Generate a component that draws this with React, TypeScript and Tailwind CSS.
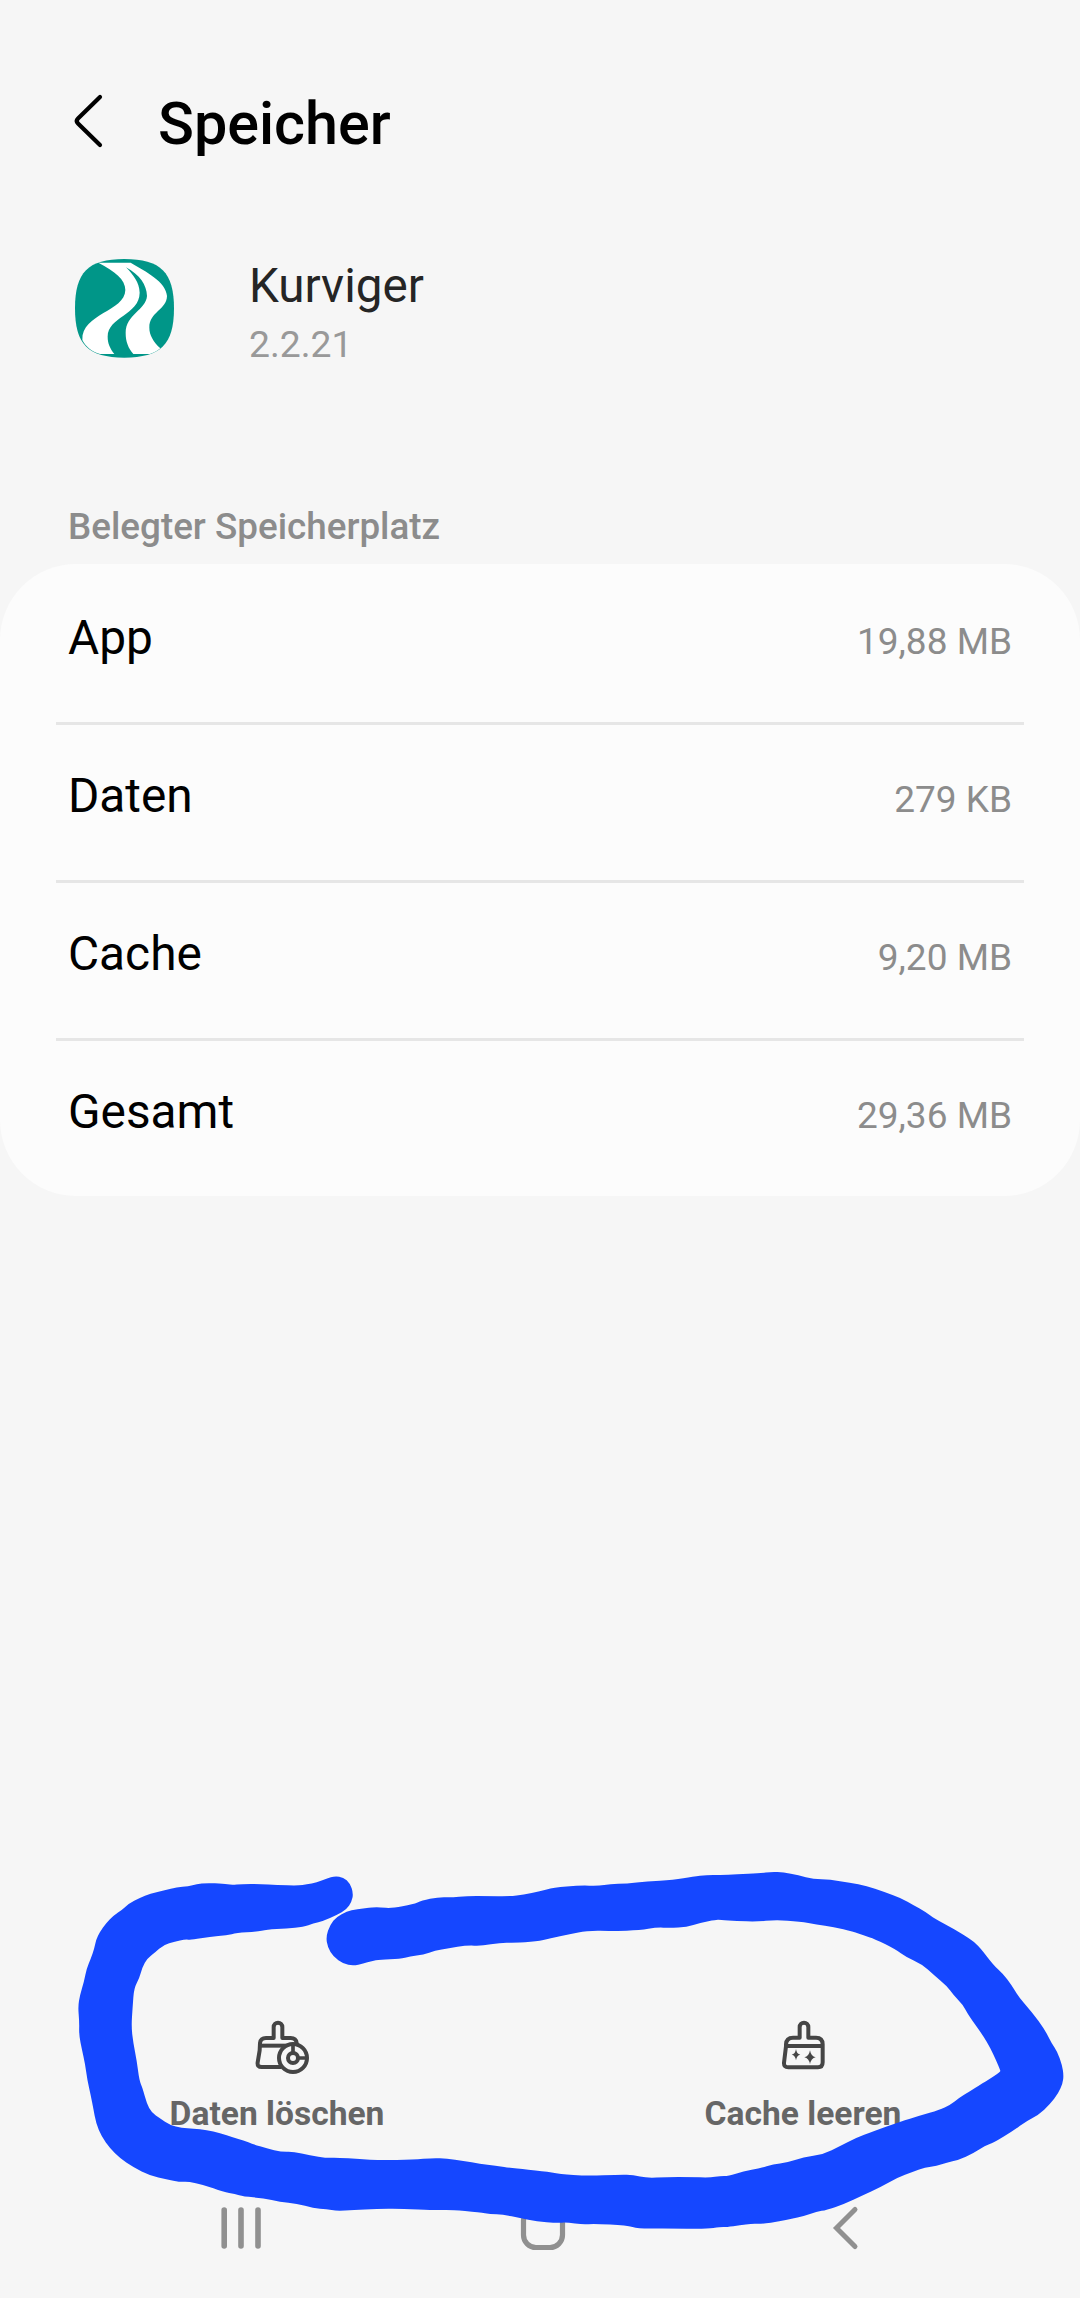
import React from "react";

const ROWS = [
  { label: "App", value: "19,88 MB" },
  { label: "Daten", value: "279 KB" },
  { label: "Cache", value: "9,20 MB" },
  { label: "Gesamt", value: "29,36 MB" },
];

type Segment = { dx: number; dy: number; pts: string };

// Outline of the hand-drawn marker stroke, in thirds of a pixel.
const MARKER: Segment[] = [
  {
    dx: 180,
    dy: 30,
    pts: "880,100 870,70 850,52 825,48 800,55 770,68 740,73 715,77 650,75 600,72 545,72 515,75 490,71 440,69 410,72 385,79 350,82 315,91 270,101 240,113 205,132 188,148 160,167 138,190 120,215 108,240 103,265 92,297 80,325 72,365 60,405 54,440 58,485 57,525 66,570 75,610 82,660 92,705 100,745 108,790 125,830 150,865 180,895 220,922 270,947 320,958 360,966 385,965 430,974 490,996 525,1002 550,1010 610,1014 660,1026 710,1030 760,1045 800,1047 830,1053 880,1050 950,1047",
  },
  {
    dx: 1140,
    dy: 0,
    pts: "60,1076 170,1081 210,1079 300,1087 330,1092 370,1094 420,1104 470,1114 530,1119 560,1117 610,1124 640,1121 740,1126 775,1136 860,1135 980,1137",
  },
  {
    dx: 2160,
    dy: 0,
    pts: "0,1131 20,1131 60,1126 95,1121 125,1122 180,1114 215,1106 250,1099 290,1085 320,1080 370,1063 430,1035 480,1012 530,984 580,965 615,952 650,948 680,938 715,930 760,910 795,887 820,879 880,842 920,813 955,795 990,763 1015,730 1028,700 1031,675 1026,645 1012,605 995,580 975,540 935,485 895,440 875,405 848,370 820,345 780,292 755,270 700,236 645,207 615,185 580,165 545,145 490,125 440,108 390,98 330,89 280,87 235,76 190,67 155,65 120,70 50,73 0,75",
  },
  {
    dx: 1140,
    dy: 0,
    pts: "980,75 940,80 880,90 800,94 740,101 690,102 655,108 600,106 520,113 480,124 430,134 390,139 320,138 260,138 215,142 175,141 125,152 100,163 35,175 0,172",
  },
  {
    dx: 180,
    dy: 30,
    pts: "940,142 890,147 860,155 830,170 810,195 798,230 803,262 820,290 850,312 880,317 910,311 935,303",
  },
  {
    dx: 1140,
    dy: 0,
    pts: "0,328 60,327 90,319 130,314 165,302 205,295 260,286 305,288 360,278 400,278 470,275 510,265 570,253 620,242 700,243 780,241 830,232 870,234 920,231 960,219 1010,209",
  },
  {
    dx: 2160,
    dy: 0,
    pts: "0,210 50,213 110,215 165,210 240,214 290,224 340,231 400,245 430,256 465,267 525,297 560,322 605,342 640,374 680,407 700,435 728,463 745,495 790,558 810,592 828,630 841,661 841,664 838,667 820,680 790,698 740,730 720,742 690,765 658,780 600,797 540,815 460,844 405,865 360,888 310,913 250,922 200,938 160,943 120,955 70,964 25,978 0,978",
  },
  {
    dx: 1140,
    dy: 0,
    pts: "990,983 930,981 860,981 800,984 760,975 720,974 620,978 540,972 490,963 400,955 345,947 300,942 250,932 200,926 160,924 100,929 0,931",
  },
  {
    dx: 180,
    dy: 30,
    pts: "900,897 830,893 800,894 750,886 700,875 665,876 620,865 580,853 550,841 520,833 480,819 440,810 400,806 365,804 330,795 300,775 275,758 260,730 248,685 238,662 230,600 220,550 214,500 218,440 222,385 238,355 247,322 262,295 285,278 310,255 345,245 375,238 395,240 450,230 500,226 530,219 590,215 620,209 680,205 730,201 760,190 790,183 830,165 860,148 875,125",
  },
];

function markerPath(): string {
  const pts = MARKER.flatMap((s) =>
    s.pts.split(" ").map((p) => {
      const [x, y] = p.split(",").map(Number);
      return [x + s.dx, y + s.dy];
    }),
  );
  const mid = (i: number) => {
    const a = pts[i % pts.length];
    const b = pts[(i + 1) % pts.length];
    return `${(a[0] + b[0]) / 2} ${(a[1] + b[1]) / 2}`;
  };
  let d = `M${mid(0)}`;
  for (let i = 1; i <= pts.length; i++) {
    const p = pts[i % pts.length];
    d += `Q${p[0]} ${p[1]} ${mid(i)}`;
  }
  return d + "Z";
}

function MarkerStroke() {
  return (
    <svg
      className="pointer-events-none absolute bottom-0 left-0 h-[448px] w-[1080px]"
      viewBox="0 0 3240 1344"
      aria-hidden="true"
    >
      <path d={markerPath()} fill="#1547ff" />
    </svg>
  );
}

function AppLogo() {
  return (
    <svg className="h-[125px] w-[130px] shrink-0" viewBox="0 0 390 375">
      <path
        d="M193 42C302 42 342 82 342 190S302 338 193 338 45 298 45 190 84 42 193 42Z"
        fill="#009688"
      />
      <path
        d="M115 53C165 80 196 103 196 135C195 200 65 205 67 285C76 304 95 320 120 327L163 327C150 310 143 295 143 275C143 215 238 210 239 143C238 112 220 90 198 67C240 90 260 120 261 153C258 195 197 208 197 264C197 290 205 310 220 327L270 327C283 323 292 317 301 310C280 290 268 270 268 248C268 200 320 195 321 153C318 110 258 80 212 53Z"
        fill="#fff"
      />
    </svg>
  );
}

function ClearDataIcon() {
  return (
    <svg
      className="h-[80px] w-[90px]"
      viewBox="-24 0 270 240"
      fill="none"
      stroke="#454545"
      strokeWidth="12"
      strokeLinejoin="round"
    >
      <path d="M170 122V114Q168 99 152 99H127V66A13 13 0 0 0 101 66V99H78Q62 99 60 114L59 136L53 172Q51 186 65 186H124" />
      <path d="M58 122H140" />
      <circle cx="159" cy="159" r="42" fill="#f6f6f6" />
      <circle cx="159" cy="159" r="15" />
      <path d="M159 118V142M177 159H200" strokeWidth="11" />
    </svg>
  );
}

function ClearCacheIcon() {
  return (
    <svg
      className="h-[80px] w-[90px]"
      viewBox="-6 0 270 240"
      fill="none"
      stroke="#454545"
      strokeWidth="12"
      strokeLinejoin="round"
    >
      <path d="M119 98V66A13 13 0 0 1 145 66V98H168Q188 98 188 118V172Q188 187 174 187H85Q71 187 72 173L78 124V118Q79 98 99 98Z" />
      <path d="M78 123H188" />
      <path
        d="M108 132Q110 147 121 149Q110 151 108 166Q106 151 95 149Q106 147 108 132ZM150 136Q153 154 167 157Q153 160 150 178Q147 160 133 157Q147 154 150 136Z"
        fill="#454545"
        stroke="none"
      />
    </svg>
  );
}

export default function App() {
  return (
    <div className="relative flex h-[2298px] w-[1080px] flex-col overflow-hidden bg-[#f6f6f6] font-['Roboto',sans-serif]">
      <header className="mt-[84px] flex h-20 items-center pl-[60px]">
        <svg className="h-20 w-[60px]" viewBox="0 0 60 80" fill="none">
          <path
            d="M40 13L18 34.500Q15.500 37 18 39.500L40 61"
            stroke="#000"
            strokeWidth="4.200"
            strokeLinecap="round"
          />
        </svg>
        <h1 className="ml-[38px] text-[59.300px] leading-[80px] font-medium text-black">
          Speicher
        </h1>
      </header>

      <section className="mt-[81px] flex h-[125px] pl-[60px]">
        <AppLogo />
        <div className="ml-[59px] flex flex-col gap-2 pt-[13px]">
          <div className="text-[47.600px] leading-[56px] text-[#252525]">
            Kurviger
          </div>
          <div className="text-[37.300px] leading-[44px] text-[#999999]">
            2.2.21
          </div>
        </div>
      </section>

      <h2 className="mt-[135px] pl-[68px] text-[36.800px] leading-[44px] font-medium text-[#8c8c8c]">
        Belegter Speicherplatz
      </h2>

      <ul className="mt-[15px] rounded-[76px] bg-[#fcfcfc] px-14">
        {ROWS.map((r) => (
          <li
            key={r.label}
            className="flex h-[158px] items-baseline justify-between border-t-[3px] border-[#e6e6e6] px-3 pt-[39px] first:border-transparent"
          >
            <span className="text-[47.800px] leading-[64px] text-black">
              {r.label}
            </span>
            <span className="text-[37px] leading-[64px] text-[#8c8c8c]">
              {r.value}
            </span>
          </li>
        ))}
      </ul>

      <div className="mt-[809px] grid grid-cols-2 px-[14px] text-[33.600px] leading-10 font-bold text-[#666666]">
        <button className="flex flex-col items-center gap-[9px]">
          <ClearDataIcon />
          Daten löschen
        </button>
        <button className="flex flex-col items-center gap-[9px]">
          <ClearCacheIcon />
          Cache leeren
        </button>
      </div>

      <nav
        className="mt-[66px] flex justify-between pr-[204px] pl-[211px]"
        aria-label="Navigation"
      >
        <svg className="h-[60px] w-[60px]" viewBox="0 0 60 60" fill="none">
          <path
            d="M13.200 10V46M30 10V46M47 10V46"
            stroke="#909090"
            strokeWidth="5.600"
            strokeLinecap="round"
          />
        </svg>
        <svg className="h-[60px] w-[60px]" viewBox="1 0 60 60" fill="none">
          <rect
            x="10.500"
            y="8"
            width="39"
            height="39.500"
            rx="12.500"
            stroke="#909090"
            strokeWidth="5.200"
          />
        </svg>
        <svg className="h-[60px] w-[60px]" viewBox="0 0 60 60" fill="none">
          <path
            d="M39 9.500L20.500 28L39 46.500"
            stroke="#909090"
            strokeWidth="5"
            strokeLinecap="round"
          />
        </svg>
      </nav>

      <MarkerStroke />
    </div>
  );
}
